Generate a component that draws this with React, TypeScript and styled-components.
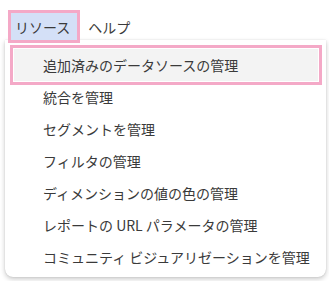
import React from "react";
import styled, { createGlobalStyle } from "styled-components";

const GlobalStyle = createGlobalStyle`
  html, body {
    margin: 0;
    padding: 0;
    background: #ffffff;
  }
  body {
    font-family: "Noto Sans CJK JP", "Noto Sans", sans-serif;
    color: #3a3a3a;
  }
`;

const Page = styled.div`
  position: relative;
  width: 329px;
  height: 281px;
  overflow: hidden;
  background: #ffffff;
`;

const MenuBar = styled.div`
  display: flex;
  align-items: center;
  gap: 1px;
  padding: 10px 0 0 8px;
`;

const MenuButton = styled.div<{ $active?: boolean }>`
  display: flex;
  align-items: center;
  height: 27px;
  padding: 0 7px 0 4px;
  font-size: 14px;
  line-height: 1;
  color: #3a3a3a;
  background: ${({ $active }) => ($active ? "#d4e0f7" : "transparent")};
  border: 3px solid ${({ $active }) => ($active ? "#f4a9c7" : "transparent")};
  position: relative;
  z-index: 2;
`;

const Dropdown = styled.ul`
  position: absolute;
  top: 40px;
  left: 5px;
  width: 321px;
  margin: 0;
  padding: 9px 0 4px;
  list-style: none;
  background: #ffffff;
  border-radius: 0 0 8px 8px;
  box-shadow: 0 2px 5px rgba(0, 0, 0, 0.22), 0 0 1px rgba(0, 0, 0, 0.2);
  z-index: 1;
`;

const Item = styled.li<{ $highlight?: boolean }>`
  display: flex;
  align-items: center;
  height: 32px;
  margin: 0 8px 0 9px;
  padding-left: 29px;
  font-size: 14px;
  color: #3a3a3a;
  white-space: nowrap;
  background: ${({ $highlight }) => ($highlight ? "#f3f3f3" : "transparent")};
  outline: ${({ $highlight }) => ($highlight ? "3px solid #f4a9c7" : "none")};
  outline-offset: 1px;
`;

const items = [
  "追加済みのデータソースの管理",
  "統合を管理",
  "セグメントを管理",
  "フィルタの管理",
  "ディメンションの値の色の管理",
  "レポートの URL パラメータの管理",
  "コミュニティ ビジュアリゼーションを管理",
];

export default function App(): React.ReactElement {
  return (
    <Page>
      <GlobalStyle />
      <MenuBar>
        <MenuButton $active>リソース</MenuButton>
        <MenuButton>ヘルプ</MenuButton>
      </MenuBar>
      <Dropdown>
        {items.map((label, i) => (
          <Item key={label} $highlight={i === 0}>
            {label}
          </Item>
        ))}
      </Dropdown>
    </Page>
  );
}
